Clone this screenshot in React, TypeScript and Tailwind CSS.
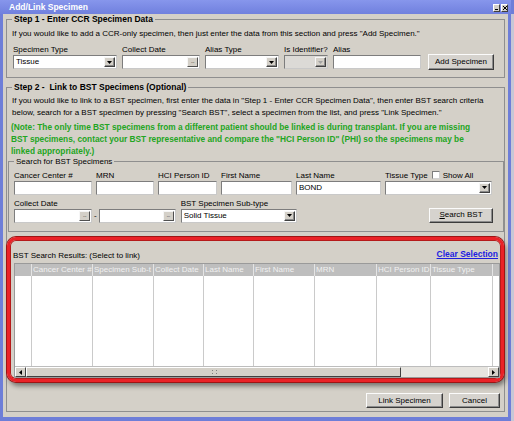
import React from "react";

function Tri({ color = "#000", dir = "down" }: { color?: string; dir?: "down" | "left" | "right" }) {
  if (dir === "left")
    return (
      <svg width="3" height="5" viewBox="0 0 3 5">
        <path d="M3 0V5L0 2.5Z" fill={color} />
      </svg>
    );
  if (dir === "right")
    return (
      <svg width="3" height="5" viewBox="0 0 3 5">
        <path d="M0 0V5L3 2.5Z" fill={color} />
      </svg>
    );
  return (
    <svg width="5" height="3" viewBox="0 0 5 3">
      <path d="M0 0H5L2.5 3Z" fill={color} />
    </svg>
  );
}

function DropBtn({ disabled }: { disabled?: boolean }) {
  return (
    <div className="ml-auto mr-[1px] w-[11px] h-[10px] flex items-center justify-center bg-[#d4d0c8] border border-t-[#f6f6f6] border-l-[#f6f6f6] border-b-[#404040] border-r-[#404040] shadow-[inset_-1px_-1px_0_#8a8a8a]">
      <Tri color={disabled ? "#a3a3a3" : "#000"} />
    </div>
  );
}

function Select({ className, value, disabled }: { className: string; value?: string; disabled?: boolean }) {
  return (
    <div
      className={`h-[14px] border border-t-[#7d7d7d] border-l-[#7d7d7d] border-b-[#c9c9c9] border-r-[#c9c9c9] flex items-center ${
        disabled ? "bg-[#dcdad6]" : "bg-white"
      } ${className}`}
    >
      <span className="pl-[2px] text-[8px] leading-none whitespace-nowrap">{value}</span>
      <DropBtn disabled={disabled} />
    </div>
  );
}

function Input({ className, value }: { className: string; value?: string }) {
  return (
    <div
      className={`h-[14px] bg-white border border-t-[#7d7d7d] border-l-[#7d7d7d] border-b-[#c9c9c9] border-r-[#c9c9c9] flex items-center ${className}`}
    >
      <span className="pl-[2px] text-[8px] leading-none">{value}</span>
    </div>
  );
}

function DateInput({ className }: { className: string }) {
  return (
    <div
      className={`h-[14px] bg-white border border-t-[#7d7d7d] border-l-[#7d7d7d] border-b-[#c9c9c9] border-r-[#c9c9c9] flex items-center ${className}`}
    >
      <div className="ml-auto mr-[1px] w-[11px] h-[10px] flex items-end justify-center pb-[2px] bg-[#d4d0c8] border border-t-[#f6f6f6] border-l-[#f6f6f6] border-b-[#505050] border-r-[#505050]">
        <span className="text-[6px] leading-none text-[#303030] tracking-[-0.5px]">...</span>
      </div>
    </div>
  );
}

function Button({ className, children }: { className: string; children: React.ReactNode }) {
  return (
    <div
      className={`flex items-center justify-center bg-[#d6d3ce] border border-t-[#fbfbfb] border-l-[#fbfbfb] border-b-[#3c3c3c] border-r-[#3c3c3c] shadow-[inset_-1px_-1px_0_#8c8c8c] text-[8px] leading-none whitespace-nowrap ${className}`}
    >
      {children}
    </div>
  );
}

function Field({ label, children }: { label: React.ReactNode; children: React.ReactNode }) {
  return (
    <div className="flex flex-col">
      <div className="text-[8px] leading-[11px] whitespace-nowrap">{label}</div>
      {children}
    </div>
  );
}

const cols: { w: string; t: string }[] = [
  { w: "w-[17px]", t: "" },
  { w: "w-[61px]", t: "Cancer Center #" },
  { w: "w-[61px]", t: "Specimen Sub-t" },
  { w: "w-[50px]", t: "Collect Date" },
  { w: "w-[50px]", t: "Last Name" },
  { w: "w-[61px]", t: "First Name" },
  { w: "w-[62px]", t: "MRN" },
  { w: "w-[54px]", t: "HCI Person ID" },
  { w: "w-[62px]", t: "Tissue Type" },
];

export default function App() {
  return (
    <div className="font-['Liberation_Sans',Arial,sans-serif] w-[514px] h-[421px] flex bg-[#2a3576] overflow-hidden text-black">
      <div className="w-[511px] h-[421px] flex flex-col bg-[#6e7ed8]">
        {/* Title bar */}
        <div className="h-[14px] flex items-center pl-[9px] pr-[3px] bg-gradient-to-b from-[#8796ec] to-[#7080de]">
          <span className="text-white font-bold text-[8.5px] leading-none">Add/Link Specimen</span>
          <div className="ml-auto flex gap-[1px] mt-[2px]">
            <div className="w-[7px] h-[8px] bg-[#d4d0c8] border border-t-white border-l-white border-b-[#404040] border-r-[#404040] flex items-end justify-center pb-[1px]">
              <div className="w-[3px] h-[1px] bg-black" />
            </div>
            <div className="w-[7px] h-[8px] bg-[#d4d0c8] border border-t-white border-l-white border-b-[#404040] border-r-[#404040] flex items-center justify-center">
              <svg width="4" height="4" viewBox="0 0 4 4">
                <path d="M0 0L4 4M4 0L0 4" stroke="#000" strokeWidth="1" />
              </svg>
            </div>
          </div>
        </div>

        {/* Body */}
        <div className="flex-1 mx-[3px] mb-[4px] bg-[#d4d0c8] flex flex-col px-[3px]">
          {/* Step 1 */}
          <fieldset className="border border-[#8f8f8f] px-[5px] pb-[8px]">
            <legend className="ml-0 px-[2px] font-bold text-[8.5px] leading-[11px]">
              Step 1 - Enter CCR Specimen Data
            </legend>
            <div className="mt-[3px] text-[8px] leading-[12px] whitespace-nowrap">
              If you would like to add a CCR-only specimen, then just enter the data from this section and press "Add Specimen."
            </div>
            <div className="mt-[4px] pl-[1px] flex items-end">
              <Field label="Specimen Type">
                <Select className="w-[104px]" value="Tissue" />
              </Field>
              <div className="ml-[5px]">
                <Field label="Collect Date">
                  <DateInput className="w-[78px]" />
                </Field>
              </div>
              <div className="ml-[5px]">
                <Field label="Alias Type">
                  <Select className="w-[74px]" />
                </Field>
              </div>
              <div className="ml-[5px]">
                <Field label="Is Identifier?">
                  <Select className="w-[44px]" disabled />
                </Field>
              </div>
              <div className="ml-[5px]">
                <Field label="Alias">
                  <Input className="w-[88px]" />
                </Field>
              </div>
              <Button className="ml-[7px] mb-[-1px] w-[66px] h-[16px]">Add Specimen</Button>
            </div>
          </fieldset>

          {/* Step 2 */}
          <fieldset className="mt-[4px] border border-[#8f8f8f] pb-[3px]">
            <legend className="ml-[5px] px-[2px] font-bold text-[8.5px] leading-[11px] whitespace-pre">
              {"Step 2 -  Link to BST Specimens (Optional)"}
            </legend>
            <div className="mt-[1.5px] px-[5px] text-[8px] leading-[12px] whitespace-nowrap">
              <div>
                If you would like to link to a BST specimen, first enter the data in "Step 1 - Enter CCR Specimen Data", then enter BST search criteria
              </div>
              <div>
                below, search for a BST specimen by pressing "Search BST", select a specimen from the list, and press "Link Specimen."
              </div>
            </div>
            <div className="mt-[2px] px-[4px] font-bold text-[8.3px] leading-[12px] text-[#22a522] whitespace-nowrap">
              <div>
                (Note: The only time BST specimens from a different patient should be linked is during transplant. If you are missing
              </div>
              <div>
                BST specimens, contact your BST representative and compare the "HCI Person ID" (PHI) so the specimens may be
              </div>
              <div>linked appropriately.)</div>
            </div>

            {/* Search for BST Specimens */}
            <fieldset className="ml-[1px] border border-[#8f8f8f] pl-[5px] pr-[4px] pt-[3px] pb-[8px]">
              <legend className="ml-[0px] px-[2px] text-[8px] leading-[10px]">Search for BST Specimens</legend>
              <div className="flex items-end gap-[4px]">
                <Field label="Cancer Center #">
                  <Input className="w-[78px]" />
                </Field>
                <Field label="MRN">
                  <Input className="w-[58px]" />
                </Field>
                <Field label="HCI Person ID">
                  <Input className="w-[59px]" />
                </Field>
                <Field label="First Name">
                  <Input className="w-[71px]" />
                </Field>
                <Field label="Last Name">
                  <Input className="w-[85px]" value="BOND" />
                </Field>
                <Field
                  label={
                    <span className="flex items-center">
                      Tissue Type
                      <span className="ml-[4px] w-[8px] h-[8px] bg-white border border-t-[#7d7d7d] border-l-[#7d7d7d] border-b-[#d0d0d0] border-r-[#d0d0d0]" />
                      <span className="ml-[3px]">Show All</span>
                    </span>
                  }
                >
                  <Select className="w-[107px]" />
                </Field>
              </div>
              <div className="mt-[3px] flex items-end">
                <Field label="Collect Date">
                  <DateInput className="w-[78px]" />
                </Field>
                <span className="mx-[2px] mb-[3px] text-[8px] leading-[8px]">-</span>
                <DateInput className="w-[77px]" />
                <div className="ml-[5px]">
                  <Field label="BST Specimen Sub-type">
                    <Select className="w-[116px]" value="Solid Tissue" />
                  </Field>
                </div>
                <Button className="ml-auto mr-[6px] w-[64px] h-[15px]">
                  <span>
                    <span className="underline">S</span>earch BST
                  </span>
                </Button>
              </div>
            </fieldset>

            {/* Results, highlighted */}
            <div className="mt-[5.5px] rounded-[9px] border-[3px] border-[#ea2227] shadow-[0_0_0_1px_#9e1414,inset_0_0_0_1px_#b51a1a,2px_4px_5px_rgba(0,0,0,0.45)] pl-[4px] pr-[1px] pt-[11px] pb-[1px]">
              <div className="flex items-end pl-[0px] pr-[2px] h-[10px]">
                <span className="ml-[-1px] text-[8px] leading-[10px]">BST Search Results: (Select to link)</span>
                <span className="ml-auto mb-[2px] text-[8.5px] leading-[10px] font-bold text-[#1d1de0] underline">
                  Clear Selection
                </span>
              </div>
              <div className="mt-[2px] w-[486px] border border-[#9a9a9a] flex flex-col">
                <div className="h-[12px] flex bg-[#bebebe]">
                  {cols.map((c, i) => (
                    <div
                      key={i}
                      className={`${c.w} h-full border-r border-[#e4e4e4] overflow-hidden whitespace-nowrap text-[8px] leading-[12px] text-[#f1f1f1] pl-[1px]`}
                    >
                      {c.t}
                    </div>
                  ))}
                  <div className="flex-1" />
                </div>
                <div className="h-[90px] flex bg-white">
                  {cols.map((c, i) => (
                    <div key={i} className={`${c.w} h-full border-r border-[#cacaca]`} />
                  ))}
                  <div className="flex-1" />
                </div>
                <div className="h-[11px] flex bg-[#e6e4df] border-t border-[#bdbdbd]">
                  <div className="w-[11px] h-full flex items-center justify-center bg-[#d4d0c8] border border-t-white border-l-white border-b-[#404040] border-r-[#404040]">
                    <Tri dir="left" />
                  </div>
                  <div className="w-[375px] h-full flex items-center justify-center bg-[#d4d0c8] border border-t-white border-l-white border-b-[#404040] border-r-[#404040]">
                    <svg width="6" height="5" viewBox="0 0 6 5" className="ml-[2px]">
                      <rect x="0" y="0" width="1" height="1" fill="#808080" />
                      <rect x="4" y="0" width="1" height="1" fill="#808080" />
                      <rect x="0" y="3" width="1" height="1" fill="#808080" />
                      <rect x="4" y="3" width="1" height="1" fill="#808080" />
                    </svg>
                  </div>
                  <div className="flex-1" />
                  <div className="w-[11px] h-full flex items-center justify-center bg-[#d4d0c8] border border-t-white border-l-white border-b-[#404040] border-r-[#404040]">
                    <Tri dir="right" />
                  </div>
                </div>
              </div>
            </div>

            <div className="mt-[11px] flex justify-end gap-[6px] pr-[4px]">
              <Button className="w-[77px] h-[15px]">Link Specimen</Button>
              <Button className="w-[51px] h-[15px]">Cancel</Button>
            </div>
          </fieldset>
        </div>
      </div>
      <div className="flex-1 flex flex-col">
        <div className="h-[14px] bg-[#6e7ed8]" />
        <div className="flex-1 bg-[#c7c7d6]" />
      </div>
    </div>
  );
}
